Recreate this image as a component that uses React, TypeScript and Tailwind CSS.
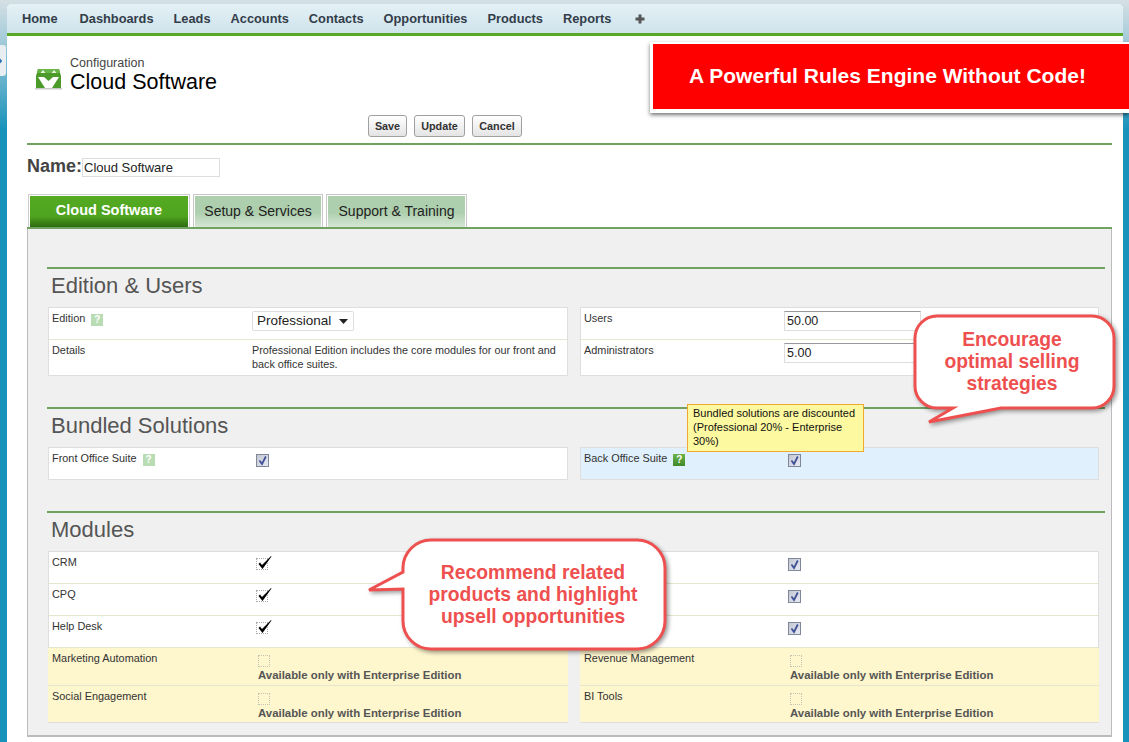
import React from 'react';
import { ChevronRight } from 'lucide-react';

const navItems = ['Dashboards', 'Leads', 'Accounts', 'Contacts', 'Opportunities', 'Products', 'Reports'];

function Help({ strong }: { strong?: boolean }) {
  return (
    <span
      className={`ml-[3px] inline-flex h-[12px] w-[12px] items-center justify-center align-[-1px] text-[10px] leading-none font-bold text-white ${
        strong ? 'bg-[linear-gradient(180deg,#6db34a,#3f8a28)]' : 'bg-[#b9dcb4]'
      }`}
    >
      ?
    </span>
  );
}

function BlueCheck() {
  return (
    <span className="flex h-[13px] w-[13px] items-center justify-center border border-[#7f8799] bg-[linear-gradient(135deg,#c3c7d3,#e8eaf1)]">
      <svg width="11" height="11" viewBox="0 0 11 11">
        <path d="M2.5 5.5 L5 9 L8.8 1.5" fill="none" stroke="#3d4f96" strokeWidth="1.7" />
      </svg>
    </span>
  );
}

function BlackCheck() {
  return (
    <span className="relative block h-[12px] w-[12px] border border-dotted border-[#aaa]">
      <svg className="absolute top-[-5px] left-[-1px]" width="17" height="17" viewBox="0 0 17 17">
        <path d="M2.5 10 L4 8.5 L6 11 L15 2 L15.5 2.5 L6.5 15 Z" fill="#000" />
      </svg>
    </span>
  );
}

function EmptyCheck() {
  return <span className="block h-[12px] w-[12px] border border-dotted border-[#c4c4b0]" />;
}

function Row({
  label,
  children,
  height,
  className = '',
}: {
  label?: React.ReactNode;
  children?: React.ReactNode;
  height: string;
  className?: string;
}) {
  return (
    <div className={`flex border-b border-[#e6e6cf] last:border-b-0 ${height} ${className}`}>
      <div className="w-[203px] shrink-0 pt-[3px] pl-[3px] text-[10.9px] leading-[14px] text-[#333]">{label}</div>
      <div className="min-w-0 flex-1">{children}</div>
    </div>
  );
}

function Table({ children, className = 'bg-white' }: { children: React.ReactNode; className?: string }) {
  return <div className={`border border-[#dedede] ${className}`}>{children}</div>;
}

function Section({ title, children }: { title: string; children: React.ReactNode }) {
  return (
    <section className="border-t-2 border-[#6fa35f] pr-[6px] pl-[1px]">
      <h2 className="h-[38px] pl-[3px] text-[22px] leading-[34px] text-[#555]">{title}</h2>
      <div className="grid grid-cols-[520px_519px] gap-x-[12px]">{children}</div>
    </section>
  );
}

function Locked({ label, last }: { label: string; last?: boolean }) {
  return (
    <Row label={label} height={last ? 'h-[36px]' : 'h-[38px]'} className="-mx-px bg-[#fef6cd] pl-px">
      <div className="pt-[7px] pl-[6px]">
        <EmptyCheck />
        <div className="mt-[1px] text-[11.4px] leading-[14px] font-bold text-[#555]">Available only with Enterprise Edition</div>
      </div>
    </Row>
  );
}

function Mark({ children, pl }: { children: React.ReactNode; pl: string }) {
  return <div className={`pt-[6px] ${pl}`}>{children}</div>;
}

export default function App() {
  return (
    <div className="relative h-[742px] w-[1129px] overflow-hidden bg-[linear-gradient(180deg,#d5e0e4_0px,#a4cbd9_40px,#1792bb_130px)] px-[7px] pt-[4px] font-['Liberation_Sans',Arial,sans-serif]">
      {/* Side handle */}
      <div className="absolute top-[45px] left-0 flex h-[31px] w-[6px] items-center overflow-hidden rounded-r-[3px] bg-[#e8eef1]">
        <ChevronRight size={10} strokeWidth={4} className="ml-[-5px] text-[#2b6fb5]" />
      </div>

      <div className="h-[738px] w-[1116px] overflow-hidden rounded-t-[5px] bg-white">
        {/* Nav */}
        <nav className="flex h-[32px] items-center gap-[20px] border-b-[3px] border-[#58a828] bg-[linear-gradient(180deg,#e4f1f6,#cfe3ec)] pl-[15px] text-[12.8px] font-bold text-[#333d4a]">
          <span className="mr-[2px]">Home</span>
          {navItems.map((item) => (
            <span key={item}>{item}</span>
          ))}
          <svg className="ml-[4px]" width="10" height="10" viewBox="0 0 10 10">
            <path d="M5 0.5 V9.5 M0.5 5 H9.5" stroke="#555" strokeWidth="3" />
          </svg>
        </nav>

        <div className="pr-[11px] pl-[20px]">
          {/* Title */}
          <div className="flex h-[79px] pt-[21px] pl-[7px]">
            <svg className="mt-[10px]" width="29" height="23" viewBox="0 0 29 23">
              <path d="M4 2 H25 L27 9 V21 H2 V9 Z" fill="#4c9a2a" />
              <path d="M4 2 H25 L26 6 H3 Z" fill="#69b548" />
              <path d="M1 21 H28 V22.5 H1 Z" fill="#c9c9c9" />
              <path d="M4 10 H10 L14.5 14 L19 10 H25 L18 21 H11 Z" fill="#fff" />
              <path d="M9 3 L6.5 6 H11.5 Z M20 3 L17.5 6 H22.5 Z" fill="#e6f4dd" />
            </svg>
            <div className="ml-[7px]">
              <div className="text-[12.5px] leading-[12px] text-[#444]">Configuration</div>
              <div className="mt-[1px] text-[21.5px] leading-[24px] text-black">Cloud Software</div>
            </div>
          </div>

          {/* Actions */}
          <div className="flex h-[30px] gap-[7px] border-b-2 border-[#6fa35f] pl-[341px]">
            <button className="h-[22px] w-[39px] rounded-[3px] border border-[#a0a0a0] bg-[linear-gradient(180deg,#fff,#e4e4e4)] text-[10.8px] font-bold text-[#333]">
              Save
            </button>
            <button className="h-[22px] w-[51px] rounded-[3px] border border-[#a0a0a0] bg-[linear-gradient(180deg,#fff,#e4e4e4)] text-[10.8px] font-bold text-[#333]">
              Update
            </button>
            <button className="h-[22px] w-[50px] rounded-[3px] border border-[#a0a0a0] bg-[linear-gradient(180deg,#fff,#e4e4e4)] text-[10.8px] font-bold text-[#333]">
              Cancel
            </button>
          </div>

          {/* Name */}
          <div className="flex h-[49px] items-start pt-[11px]">
            <span className="text-[18px] leading-[21px] font-bold text-[#444]">Name:</span>
            <input
              readOnly
              value="Cloud Software"
              className="mt-[2px] h-[19px] w-[138px] border border-[#ddd] bg-white pl-[1px] text-[13px] text-[#222] outline-none"
            />
          </div>

          {/* Tabs */}
          <div className="flex h-[35px] items-end gap-[3px] border-b-2 border-[#6fa35f] pl-[1px]">
            <div className="h-[33px] w-[162px] border border-b-0 border-[#ccc] px-[1px] pt-[1px]">
              <div className="flex h-[31px] items-center justify-center bg-[linear-gradient(180deg,#55aa22_0%,#4fa41f_65%,#2c6a10_100%)] pb-[2px] text-[14.5px] font-bold text-white">
                Cloud Software
              </div>
            </div>
            <div className="flex h-[33px] w-[130px] items-center justify-center border border-b-0 border-[#c8c8c8] bg-[linear-gradient(180deg,#aecfae_0%,#aecfae_55%,#d5e6d5_100%)] text-[14px] text-[#222] shadow-[inset_1px_1px_0_#fff,inset_-1px_0_0_#fff]">
              Setup &amp; Services
            </div>
            <div className="flex h-[33px] w-[141px] items-center justify-center border border-b-0 border-[#c8c8c8] bg-[linear-gradient(180deg,#aecfae_0%,#aecfae_55%,#d5e6d5_100%)] text-[14px] text-[#222] shadow-[inset_1px_1px_0_#fff,inset_-1px_0_0_#fff]">
              Support &amp; Training
            </div>
          </div>

          {/* Panel */}
          <div className="h-[508px] border-x border-b-2 border-[#bbb] bg-[#f0f0f0] pt-[38px] pr-[6px] pl-[19px]">
            <Section title="Edition & Users">
              <Table>
                <Row label={<>Edition <Help /></>} height="h-[32px]">
                  <div className="pt-[3px]">
                    <div className="flex h-[20px] w-[102px] items-center justify-between rounded-[2px] border border-[#ddd] bg-white pr-[5px] pl-[4px] text-[13.5px] text-[#222]">
                      Professional
                      <svg width="9" height="5" viewBox="0 0 9 5"><path d="M0 0 H9 L4.5 5 Z" fill="#222" /></svg>
                    </div>
                  </div>
                </Row>
                <Row label="Details" height="h-[35px]">
                  <div className="pt-[3px] text-[10.8px] leading-[14px] text-[#333]">
                    Professional Edition includes the core modules for our front and back office suites.
                  </div>
                </Row>
              </Table>
              <Table>
                <Row label="Users" height="h-[32px]">
                  <div className="pt-[3px]">
                    <input readOnly value="50.00" className="block h-[20px] w-[137px] border border-[#ddd] border-t-[#999] pl-[2px] text-[12.5px] text-[#222] outline-none" />
                  </div>
                </Row>
                <Row label="Administrators" height="h-[35px]">
                  <div className="pt-[3px]">
                    <input readOnly value="5.00" className="block h-[20px] w-[137px] border border-[#ddd] border-t-[#999] pl-[2px] text-[12.5px] text-[#222] outline-none" />
                  </div>
                </Row>
              </Table>
            </Section>

            <div className="mt-[31px]">
              <Section title="Bundled Solutions">
                <Table>
                  <Row label={<>Front Office Suite <Help /></>} height="h-[31px]">
                    <Mark pl="pl-[4px]"><BlueCheck /></Mark>
                  </Row>
                </Table>
                <Table className="bg-[#e0f0fc]">
                  <Row label={<>Back Office Suite <Help strong /></>} height="h-[31px]">
                    <Mark pl="pl-[4px]"><BlueCheck /></Mark>
                  </Row>
                </Table>
              </Section>
            </div>

            <div className="mt-[31px]">
              <Section title="Modules">
                <Table>
                  <Row label="CRM" height="h-[32px]">
                    <Mark pl="pl-[4px]"><BlackCheck /></Mark>
                  </Row>
                  <Row label="CPQ" height="h-[32px]">
                    <Mark pl="pl-[4px]"><BlackCheck /></Mark>
                  </Row>
                  <Row label="Help Desk" height="h-[32px]">
                    <Mark pl="pl-[4px]"><BlackCheck /></Mark>
                  </Row>
                  <Locked label="Marketing Automation" />
                  <Locked label="Social Engagement" last />
                </Table>
                <Table>
                  <Row height="h-[32px]">
                    <Mark pl="pl-[4px]"><BlueCheck /></Mark>
                  </Row>
                  <Row height="h-[32px]">
                    <Mark pl="pl-[4px]"><BlueCheck /></Mark>
                  </Row>
                  <Row height="h-[32px]">
                    <Mark pl="pl-[4px]"><BlueCheck /></Mark>
                  </Row>
                  <Locked label="Revenue Management" />
                  <Locked label="BI Tools" last />
                </Table>
              </Section>
            </div>
          </div>
        </div>
      </div>

      {/* Banner */}
      <div className="absolute top-[42px] left-[650px] flex h-[71px] w-[479px] items-center justify-center border-t-2 border-b-4 border-l-[3px] border-white bg-[#ff0000] pr-[7px] pb-[2px] text-[21px] font-bold text-white shadow-[0_2px_4px_rgba(0,0,0,0.55)]">
        A Powerful Rules Engine Without Code!
      </div>

      {/* Tooltip */}
      <div className="absolute top-[404px] left-[687px] h-[48px] w-[177px] border border-[#f0a830] bg-[#fdf9a0] pt-[1px] pl-[5px] text-[11px] leading-[14px] text-[#111]">
        Bundled solutions are discounted (Professional 20% - Enterprise 30%)
      </div>

      {/* Callout: selling strategies */}
      <div className="absolute top-[310px] left-[905px] h-[120px] w-[220px]">
        <svg className="absolute inset-0 drop-shadow-[2px_2px_2px_rgba(0,0,0,0.4)]" width="220" height="120" viewBox="905 310 220 120">
          <path
            d="M937 316 H1092 A22 22 0 0 1 1114 338 V386 A22 22 0 0 1 1092 408 H1001 L929 422 L953 408 H937 A22 22 0 0 1 915 386 V338 A22 22 0 0 1 937 316 Z"
            fill="#fff"
            stroke="#ee5050"
            strokeWidth="3"
          />
        </svg>
        <div className="absolute top-[19px] left-[7px] w-[200px] text-center text-[19.3px] leading-[22px] font-bold text-[#ee5050]">
          Encourage<br />optimal selling<br />strategies
        </div>
      </div>

      {/* Callout: upsell */}
      <div className="absolute top-[530px] left-[360px] h-[130px] w-[315px]">
        <svg className="absolute inset-0 drop-shadow-[2px_2px_2px_rgba(0,0,0,0.4)]" width="315" height="130" viewBox="360 530 315 130">
          <path
            d="M431 540 H637 A28 28 0 0 1 665 568 V621 A28 28 0 0 1 637 649 H431 A28 28 0 0 1 403 621 V589 L369 590 L403 572 V568 A28 28 0 0 1 431 540 Z"
            fill="#fff"
            stroke="#ee5050"
            strokeWidth="3"
          />
        </svg>
        <div className="absolute top-[32px] left-[42px] w-[262px] text-center text-[19.3px] leading-[22px] font-bold text-[#ee5050]">
          Recommend related<br />products and highlight<br />upsell opportunities
        </div>
      </div>
    </div>
  );
}
